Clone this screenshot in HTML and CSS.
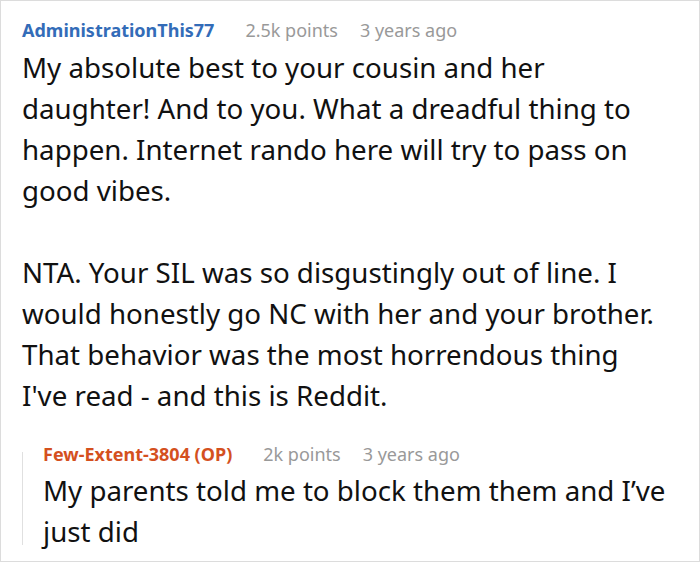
FILE: index.html
```html
<!DOCTYPE html>
<html>
<head>
<meta charset="utf-8">
<link rel="stylesheet" href="styles.css">
</head>
<body>
<div class="frame">
  <div class="comment">
    <div class="meta">
      <span class="user">AdministrationThis77</span>
      <span class="info">2.5k points</span>
      <span class="info">3 years ago</span>
    </div>
    <div class="body">
      <p>My absolute best to your cousin and her daughter! And to you. What a dreadful thing to happen. Internet rando here will try to pass on good vibes.</p>
      <p>NTA. Your SIL was so disgustingly out of line. I would honestly go NC with her and your brother. That behavior was the most horrendous thing I've read - and this is Reddit.</p>
    </div>
    <div class="reply">
      <div class="thread"></div>
      <div class="reply-content">
        <div class="meta">
          <span class="user op">Few-Extent-3804 (OP)</span>
          <span class="info">2k points</span>
          <span class="info">3 years ago</span>
        </div>
        <div class="body reply-body">
          <p>My parents told me to block them them and I’ve just did</p>
        </div>
      </div>
    </div>
  </div>
</div>
</body>
</html>
```

FILE: styles.css
```css
html, body {
  margin: 0;
  padding: 0;
  background: #fff;
}
.frame {
  width: 700px;
  height: 562px;
  box-sizing: border-box;
  border: 1px solid #dcdcdc;
  overflow: hidden;
  font-family: "Noto Sans", "Open Sans", sans-serif;
  color: #111;
}
.comment {
  padding: 16px 31px 0 21px;
}
.meta {
  display: flex;
  font-size: 18px;
  line-height: 26px;
  white-space: nowrap;
}
.user {
  font-weight: 700;
  color: #336cb8;
  margin-right: 31px;
}
.user.op {
  color: #d4501e;
}
.info {
  color: #999;
  margin-right: 22px;
}
.body {
  font-size: 27.7px;
  line-height: 41px;
  margin-top: 4px;
}
.body p {
  margin: 0 0 41px 0;
}
.body p:last-child {
  margin-bottom: 0;
}
.reply {
  display: flex;
  margin-top: 25px;
}
.thread {
  flex: 0 0 1px;
  background: #e0e0e0;
  margin: 11px 20px 7px 0;
}
.reply-content {
  flex: 1;
}
.reply-body {
  margin-top: 3px;
}
```
